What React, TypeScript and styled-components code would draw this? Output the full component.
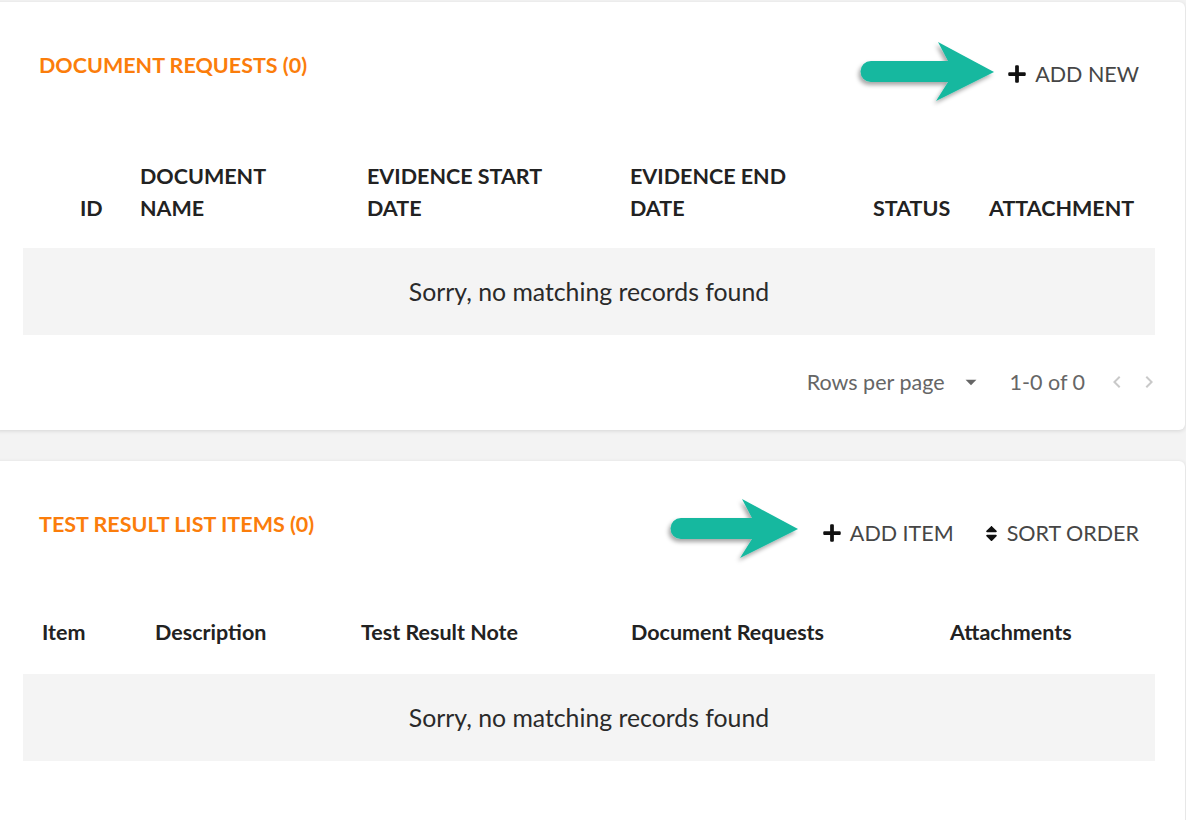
import React from "react";
import styled, { createGlobalStyle } from "styled-components";
import { FaPlus, FaSort } from "react-icons/fa";
import { MdArrowDropDown, MdChevronLeft, MdChevronRight } from "react-icons/md";

const GlobalStyle = createGlobalStyle`
    body {
        margin: 0;
        background: #f3f3f3;
        font-family: Lato, "Open Sans", sans-serif;
        overflow: hidden;
    }
`;

const Page = styled.div`
    padding-top: 2px;
    display: flex;
    flex-direction: column;
    gap: 31px;
`;

const Card = styled.section`
    background: #fff;
    margin: 0 1px 0 -7px;
    border-radius: 6px;
    box-shadow: 0 1px 4px rgba(0, 0, 0, 0.12);
    padding: 0 30px;
`;

const CardHeader = styled.div`
    display: flex;
    justify-content: space-between;
    align-items: flex-start;
    padding: 51px 16px 0 16px;
`;

const Title = styled.h2`
    margin: 0;
    font-size: 21.5px;
    line-height: 24px;
    font-weight: 700;
    color: #fb7d0b;
`;

const Actions = styled.div`
    display: flex;
    gap: 28px;
    padding-top: 9px;
`;

const ActionButton = styled.button<{ $iconGap?: number }>`
    position: relative;
    display: flex;
    align-items: center;
    gap: ${(p) => p.$iconGap ?? 8}px;
    border: 0;
    background: none;
    padding: 0;
    font-family: inherit;
    font-size: 21.5px;
    line-height: 24px;
    color: #464646;
    cursor: pointer;
    svg.icon {
        color: #111;
    }
`;

const ArrowWrap = styled.span<{ $gap: number; $dy: number }>`
    position: absolute;
    right: calc(100% + ${(p) => p.$gap}px);
    top: 50%;
    transform: translateY(calc(-50% + ${(p) => p.$dy}px));
    display: flex;
`;

const Table = styled.div<{ $cols: string }>`
    display: grid;
    grid-template-columns: ${(p) => p.$cols};
`;

const HeadCell = styled.div`
    display: flex;
    align-items: flex-end;
    font-size: 21.5px;
    line-height: 32px;
    font-weight: 700;
    color: #222;
`;

const HeadRow = styled.div<{ $height: number; $pad: number }>`
    display: contents;
    & > div {
        height: ${(p) => p.$height}px;
        padding-bottom: ${(p) => p.$pad}px;
        box-sizing: border-box;
    }
`;

const EmptyRow = styled.div`
    grid-column: 1 / -1;
    height: 87px;
    background: #f4f4f4;
    display: flex;
    align-items: center;
    justify-content: center;
    font-size: 24.8px;
    color: #2a2a2a;
`;

const Pagination = styled.div`
    display: flex;
    justify-content: flex-end;
    align-items: center;
    height: 94px;
    padding-bottom: 1px;
    margin-right: -6px;
    font-size: 21.5px;
    color: #666;
`;

const RowsSelect = styled.span`
    display: flex;
    align-items: center;
    gap: 13px;
    margin-right: 26px;
    svg {
        color: #666;
    }
`;

const PagerButtons = styled.span`
    display: flex;
    gap: 8px;
    margin-left: 20px;
    color: #c9c9c9;
`;

const Arrow: React.FC<{ short?: boolean }> = ({ short }) => {
    const d = short ? 6 : 0;
    return (
        <svg width={150 - d} height={74} viewBox={`-4 -4 ${150 - d} 74`} style={{ overflow: "visible" }}>
            <defs>
                <filter id={`shadow${d}`} x="-20%" y="-20%" width="140%" height="160%">
                    <feDropShadow dx="-2" dy="3" stdDeviation="2.2" floodColor="#000" floodOpacity="0.35" />
                </filter>
            </defs>
            <path
                filter={`url(#shadow${d})`}
                fill="#14b89f"
                d={`M12 20 L${89 - d} 20 L${79 - d} 1 L${135 - d} 31 L${77 - d} 60 L${89 - d} 41 L12 41 A10.5 10.5 0 0 1 12 20 Z`}
            />
        </svg>
    );
};

const docCols = "57px 60px 227px 263px 243px 116px 1fr";
const itemCols = "19px 113px 206px 270px 319px 1fr";

export default function App() {
    return (
        <Page>
            <GlobalStyle />
            <Card>
                <CardHeader>
                    <Title>DOCUMENT REQUESTS (0)</Title>
                    <Actions>
                        <ActionButton>
                            <ArrowWrap $gap={2} $dy={0}><Arrow /></ArrowWrap>
                            <FaPlus className="icon" size={20} />
                            ADD NEW
                        </ActionButton>
                    </Actions>
                </CardHeader>
                <Table $cols={docCols} style={{ marginTop: 44 }}>
                    <HeadRow $height={118} $pad={24}>
                        <HeadCell />
                        <HeadCell>ID</HeadCell>
                        <HeadCell>DOCUMENT<br />NAME</HeadCell>
                        <HeadCell>EVIDENCE START<br />DATE</HeadCell>
                        <HeadCell>EVIDENCE END<br />DATE</HeadCell>
                        <HeadCell>STATUS</HeadCell>
                        <HeadCell>ATTACHMENT</HeadCell>
                    </HeadRow>
                    <EmptyRow>Sorry, no matching records found</EmptyRow>
                </Table>
                <Pagination>
                    <RowsSelect>
                        Rows per page
                        <MdArrowDropDown size={26} />
                    </RowsSelect>
                    1-0 of 0
                    <PagerButtons>
                        <MdChevronLeft size={24} />
                        <MdChevronRight size={24} />
                    </PagerButtons>
                </Pagination>
            </Card>
            <Card style={{ minHeight: 400 }}>
                <CardHeader>
                    <Title>TEST RESULT LIST ITEMS (0)</Title>
                    <Actions>
                        <ActionButton>
                            <ArrowWrap $gap={13} $dy={-2}><Arrow short /></ArrowWrap>
                            <FaPlus className="icon" size={20} />
                            ADD ITEM
                        </ActionButton>
                        <ActionButton $iconGap={6}>
                            <FaSort className="icon" size={19} />
                            SORT ORDER
                        </ActionButton>
                    </Actions>
                </CardHeader>
                <Table $cols={itemCols} style={{ marginTop: 47 }}>
                    <HeadRow $height={82} $pad={26}>
                        <HeadCell />
                        <HeadCell>Item</HeadCell>
                        <HeadCell>Description</HeadCell>
                        <HeadCell>Test Result Note</HeadCell>
                        <HeadCell>Document Requests</HeadCell>
                        <HeadCell>Attachments</HeadCell>
                    </HeadRow>
                    <EmptyRow>Sorry, no matching records found</EmptyRow>
                </Table>
            </Card>
        </Page>
    );
}
